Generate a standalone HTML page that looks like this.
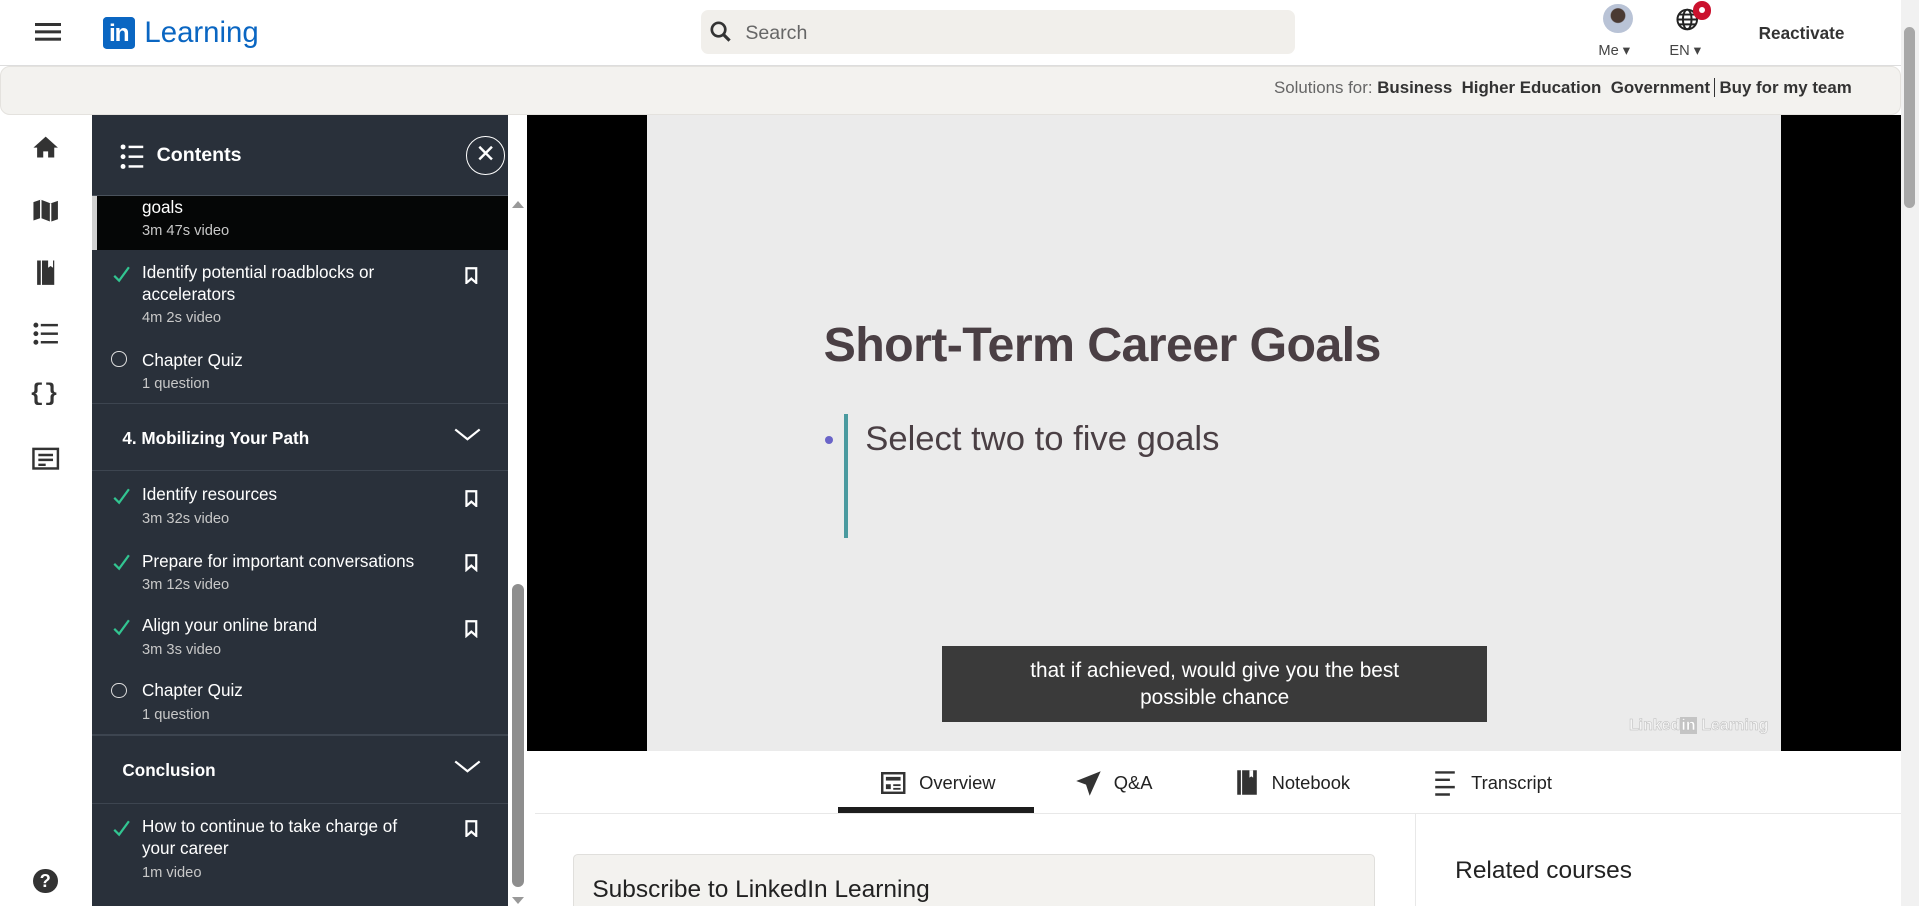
<!DOCTYPE html>
<html><head><meta charset="utf-8"><style>
html,body{margin:0;padding:0;width:1919px;height:906px;overflow:hidden;background:#fff}
#w{zoom:1.22385;width:1568px;height:740px;position:relative;font-family:"Liberation Sans",sans-serif;color:#000000e6;overflow:hidden}
.a{position:absolute}
.it{position:absolute;left:116px;color:#fff;font-size:14px;line-height:18px}
.it small{display:block;color:#c8c8c8;font-size:12px;margin-top:2px}
.ck{position:absolute;left:92px;width:14px;height:14px}
.bm{position:absolute;left:379px;width:12px;height:14px}
.sec{position:absolute;left:100px;color:#fff;font-weight:bold;font-size:14px}
.hr{position:absolute;left:75px;width:340px;height:1px;background:#3d4550}
.ic{position:absolute;left:25px;width:24px;height:24px}
</style></head><body><div id="w">
<div class="a" style="left:0;top:0;width:1568px;height:53px;border-bottom:1px solid #ddd"></div>
<div class="a" style="left:29px;top:19px;width:21px;height:2px;background:#333;box-shadow:0 6px 0 #333,0 12px 0 #333"></div>
<div class="a" style="left:84px;top:14px;width:26px;height:26px;background:#0a66c2;border-radius:3px;color:#fff;font-weight:bold;font-size:20px;line-height:28px;text-align:center;letter-spacing:-1px">in</div>
<div class="a" style="left:118px;top:13px;font-size:24px;color:#0a66c2">Learning</div>
<div class="a" style="left:573px;top:8px;width:485px;height:36px;background:#f1efeb;border-radius:6px"></div>
<svg class="a" style="left:580px;top:17px" width="18" height="18" viewBox="0 0 18 18"><circle cx="7" cy="7" r="5.5" fill="none" stroke="#333" stroke-width="2.2"/><path d="M11 11l5 5" stroke="#333" stroke-width="2.6"/></svg>
<div class="a" style="left:609px;top:18px;font-size:16px;color:#666">Search</div>
<div class="a" style="left:1310px;top:3px;width:24px;height:24px;border-radius:50%;background:radial-gradient(circle at 50% 40%,#4a3a33 30%,#b9c3d6 34%)"></div>
<div class="a" style="left:1306px;top:34px;font-size:12px;color:#444">Me ▾</div>
<svg class="a" style="left:1369px;top:5px" width="22" height="22" viewBox="0 0 22 22"><g fill="none" stroke="#222" stroke-width="1.6"><circle cx="10" cy="11" r="8"/><ellipse cx="10" cy="11" rx="3.5" ry="8"/><path d="M2 11h16M3 7h14M3 15h14"/></g></svg>
<div class="a" style="left:1383px;top:1px;width:15px;height:15px;border-radius:50%;background:#cb112d"><div style="margin:5px;width:5px;height:5px;border-radius:50%;background:#fff"></div></div>
<div class="a" style="left:1364px;top:34px;font-size:12px;color:#444">EN ▾</div>
<div class="a" style="left:1437px;top:19px;font-size:14px;font-weight:bold;color:#333">Reactivate</div>
<div class="a" style="left:0;top:54px;width:1552px;height:38px;background:#f3f2ef;border:1px solid #e4e2de;border-radius:8px"></div>
<div class="a" style="left:1041px;top:64px;font-size:13.8px;color:#666;white-space:nowrap">Solutions for: <b style="color:#333;font-weight:600">Business</b>&nbsp; <b style="color:#333;font-weight:600">Higher Education</b>&nbsp; <b style="color:#333;font-weight:600;border-right:1px solid #333;padding-right:3px">Government</b> <b style="color:#333;font-weight:600">Buy for my team</b></div>
<div class="a" style="left:1553px;top:0;width:15px;height:740px;background:#f1f1f1"></div>
<div class="a" style="left:1556px;top:22px;width:9px;height:148px;background:#a8a8a8;border-radius:5px"></div>
<svg class="ic" style="top:109px" viewBox="0 0 24 24"><path d="M12 3L2 12h3v8h5v-5h4v5h5v-8h3z" fill="#333"/></svg>
<svg class="ic" style="top:160px" viewBox="0 0 24 24"><path d="M2 5l6-2 8 3 6-2v15l-6 2-8-3-6 2z" fill="#333"/><path d="M8 3v16M16 6v16" stroke="#fff" stroke-width="1.2"/></svg>
<svg class="ic" style="top:211px" viewBox="0 0 24 24"><path d="M5 2h3v20H5zM9 2h10v20H9z" fill="#333"/><path d="M14 2v6l2-1.5 2 1.5V2" fill="#fff"/></svg>
<svg class="ic" style="top:261px" viewBox="0 0 24 24"><g fill="#333"><circle cx="4" cy="5" r="2"/><circle cx="4" cy="12" r="2"/><circle cx="4" cy="19" r="2"/><rect x="8" y="4" width="14" height="2"/><rect x="8" y="11" width="14" height="2"/><rect x="8" y="18" width="14" height="2"/></g></svg>
<div class="a" style="left:24px;top:311px;font-size:20px;font-weight:bold;color:#333;font-family:'Liberation Mono',monospace">{}</div>
<svg class="ic" style="top:363px" viewBox="0 0 24 24"><rect x="2" y="4" width="20" height="16" fill="none" stroke="#333" stroke-width="2"/><path d="M6 9h12M6 13h12M6 17h6" stroke="#333" stroke-width="2"/></svg>
<div class="a" style="left:27px;top:710px;width:20px;height:20px;border-radius:50%;background:#333;color:#fff;font-weight:bold;font-size:15px;text-align:center;line-height:20px">?</div>
<div class="a" style="left:75px;top:94px;width:340px;height:646px;background:#29303a"></div>
<div class="a" style="left:75px;top:94px;width:340px;height:65px;background:#29303a;border-bottom:1px solid #4a525c"></div>
<svg class="a" style="left:98px;top:116px" width="20" height="24" viewBox="0 0 20 24"><g fill="#fff"><circle cx="2.5" cy="4" r="2"/><circle cx="2.5" cy="12" r="2"/><circle cx="2.5" cy="20" r="2"/><rect x="7" y="3" width="12" height="2"/><rect x="7" y="11" width="12" height="2"/><rect x="7" y="19" width="12" height="2"/></g></svg>
<div class="a" style="left:128px;top:118px;color:#fff;font-size:16px;font-weight:bold">Contents</div>
<div class="a" style="left:381px;top:111px;width:30px;height:30px;border:1.5px solid #fff;border-radius:50%;color:#fff;text-align:center;line-height:30px;font-size:20px">✕</div>
<div class="a" style="left:79px;top:160px;width:336px;height:44px;background:#050606"></div>
<div class="a" style="left:75px;top:160px;width:4px;height:44px;background:#d0d0d0"></div>
<div class="it" style="top:160px">goals<small>3m 47s video</small></div>
<svg class="ck" style="top:217px" viewBox="0 0 14 14"><path d="M1 8l4 4 8-11" fill="none" stroke="#32c591" stroke-width="1.8"/></svg>
<div class="it" style="top:213px">Identify potential roadblocks or<br>accelerators<small>4m 2s video</small></div>
<svg class="bm" style="top:218px" viewBox="0 0 12 14"><path d="M2 1h8v12l-4-3.5L2 13z" fill="none" stroke="#fff" stroke-width="1.8"/></svg>
<div class="a" style="left:91px;top:287px;width:11px;height:11px;border:1px solid #ddd;border-radius:50%"></div>
<div class="it" style="top:285px">Chapter Quiz<small>1 question</small></div>
<div class="hr" style="top:329px"></div>
<div class="sec" style="top:350px">4. Mobilizing Your Path</div>
<svg class="a" style="left:371px;top:349px" width="22" height="12" viewBox="0 0 22 12"><path d="M1 2l10 8 10-8" fill="none" stroke="#fff" stroke-width="1.8"/></svg>
<div class="hr" style="top:384px"></div>
<svg class="ck" style="top:399px" viewBox="0 0 14 14"><path d="M1 8l4 4 8-11" fill="none" stroke="#32c591" stroke-width="1.8"/></svg>
<div class="it" style="top:395px">Identify resources<small>3m 32s video</small></div>
<svg class="bm" style="top:400px" viewBox="0 0 12 14"><path d="M2 1h8v12l-4-3.5L2 13z" fill="none" stroke="#fff" stroke-width="1.8"/></svg>
<svg class="ck" style="top:453px" viewBox="0 0 14 14"><path d="M1 8l4 4 8-11" fill="none" stroke="#32c591" stroke-width="1.8"/></svg>
<div class="it" style="top:449px">Prepare for important conversations<small>3m 12s video</small></div>
<svg class="bm" style="top:453px" viewBox="0 0 12 14"><path d="M2 1h8v12l-4-3.5L2 13z" fill="none" stroke="#fff" stroke-width="1.8"/></svg>
<svg class="ck" style="top:506px" viewBox="0 0 14 14"><path d="M1 8l4 4 8-11" fill="none" stroke="#32c591" stroke-width="1.8"/></svg>
<div class="it" style="top:502px">Align your online brand<small>3m 3s video</small></div>
<svg class="bm" style="top:507px" viewBox="0 0 12 14"><path d="M2 1h8v12l-4-3.5L2 13z" fill="none" stroke="#fff" stroke-width="1.8"/></svg>
<div class="a" style="left:91px;top:558px;width:11px;height:11px;border:1px solid #ddd;border-radius:50%"></div>
<div class="it" style="top:555px">Chapter Quiz<small>1 question</small></div>
<div class="hr" style="top:600px"></div>
<div class="sec" style="top:621px">Conclusion</div>
<svg class="a" style="left:371px;top:620px" width="22" height="12" viewBox="0 0 22 12"><path d="M1 2l10 8 10-8" fill="none" stroke="#fff" stroke-width="1.8"/></svg>
<div class="hr" style="top:656px"></div>
<svg class="ck" style="top:670px" viewBox="0 0 14 14"><path d="M1 8l4 4 8-11" fill="none" stroke="#32c591" stroke-width="1.8"/></svg>
<div class="it" style="top:666px">How to continue to take charge of<br>your career<small>1m video</small></div>
<svg class="bm" style="top:670px" viewBox="0 0 12 14"><path d="M2 1h8v12l-4-3.5L2 13z" fill="none" stroke="#fff" stroke-width="1.8"/></svg>
<div class="a" style="left:415px;top:159px;width:16px;height:581px;background:#fff"></div>
<div class="a" style="left:418px;top:164px;width:0;height:0;border:5px solid transparent;border-bottom:6px solid #999;border-top:0"></div>
<div class="a" style="left:418px;top:477px;width:10px;height:248px;background:#8e8e8e;border-radius:5px"></div>
<div class="a" style="left:418px;top:733px;width:0;height:0;border:5px solid transparent;border-top:6px solid #999;border-bottom:0"></div>
<div class="a" style="left:431px;top:94px;width:1122px;height:520px;background:#000"></div>
<div class="a" style="left:529px;top:94px;width:926px;height:520px;background:#ebebeb"></div>
<div class="a" style="left:673px;top:259px;font-size:39.5px;font-weight:bold;color:#4a3f44;letter-spacing:-0.5px">Short-Term Career Goals</div>
<div class="a" style="left:674px;top:356px;width:7px;height:7px;border-radius:50%;background:#6a64c8"></div>
<div class="a" style="left:690px;top:338px;width:3px;height:102px;background:#4a9a9f"></div>
<div class="a" style="left:707px;top:343px;font-size:28.3px;color:#4a3f44">Select two to five goals</div>
<div class="a" style="left:770px;top:528px;width:445px;height:62px;background:#3a3a3a;color:#fff;font-size:17px;line-height:22px;text-align:center;padding-top:10px;box-sizing:border-box">that if achieved, would give you the best<br>possible chance</div>
<div class="a" style="left:1331px;top:586px;font-size:13px;font-weight:bold;color:#f4f4f4;-webkit-text-stroke:0.4px #bbb">Linked<span style="background:#c4c4c4;color:#fff;padding:0 1px">in</span> Learning</div>
<div class="a" style="left:437px;top:664px;width:1116px;height:1px;background:#e8e8e8"></div>
<div class="a" style="left:685px;top:659px;width:160px;height:5px;background:#1d1d1d"></div>
<svg class="a" style="left:720px;top:631px" width="20" height="18" viewBox="0 0 20 18"><rect x="1" y="1" width="18" height="16" fill="none" stroke="#333" stroke-width="2"/><rect x="4" y="4" width="12" height="3" fill="#333"/><rect x="4" y="10" width="4" height="4" fill="#333"/><rect x="10" y="10" width="6" height="1.5" fill="#333"/><rect x="10" y="13" width="6" height="1.5" fill="#333"/></svg>
<div class="a" style="left:751px;top:631px;font-size:15px;color:#222">Overview</div>
<svg class="a" style="left:878px;top:629px" width="22" height="22" viewBox="0 0 22 22"><path d="M21 1L1 9l8 3 3 9z" fill="#333"/></svg>
<div class="a" style="left:910px;top:631px;font-size:15px;color:#222">Q&amp;A</div>
<svg class="a" style="left:1010px;top:628px" width="18" height="22" viewBox="0 0 18 22"><path d="M1 1h3v20H1zM5 1h12v20H5z" fill="#333"/><path d="M11 1v6l1.5-1 1.5 1V1" fill="#fff"/></svg>
<div class="a" style="left:1039px;top:631px;font-size:15px;color:#222">Notebook</div>
<svg class="a" style="left:1172px;top:629px" width="18" height="22" viewBox="0 0 18 22"><path d="M1 2h16M1 8h12M1 14h16M1 20h12" stroke="#333" stroke-width="2"/></svg>
<div class="a" style="left:1202px;top:631px;font-size:15px;color:#222">Transcript</div>
<div class="a" style="left:1156px;top:665px;width:1px;height:75px;background:#e8e8e8"></div>
<div class="a" style="left:468px;top:698px;width:654px;height:60px;background:#f3f2ef;border:1px solid #e0dfdc;border-radius:4px"></div>
<div class="a" style="left:484px;top:716px;font-size:20px;color:#222">Subscribe to LinkedIn Learning</div>
<div class="a" style="left:1189px;top:700px;font-size:20px;color:#222">Related courses</div>
</div></body></html>
